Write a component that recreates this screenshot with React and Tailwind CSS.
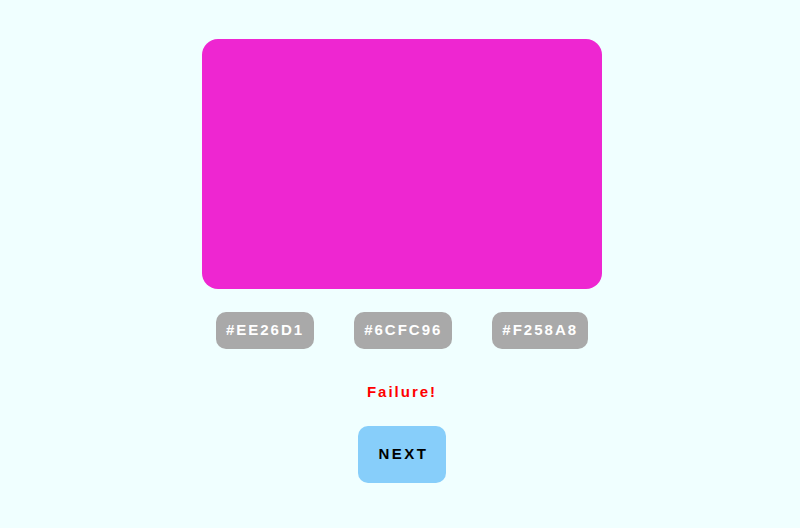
export default function App() {
  const options = ["#EE26D1", "#6CFC96", "#F258A8"];

  return (
    <div className="min-h-[528px] w-full bg-[#F0FFFF] font-['Liberation_Sans',Arial,sans-serif]">
      <div className="flex flex-col items-center pt-[39px] pl-[4px]">
        {/* Colour swatch */}
        <div className="h-[250px] w-[400px] rounded-[16px] bg-[#EE26D1]" />

        {/* Guess buttons */}
        <div className="mt-[23px] flex gap-[40px]">
          {options.map((hex) => (
            <button
              key={hex}
              className="flex h-[37px] items-center rounded-[10px] bg-[#A9A9A9] px-[10px] text-[15px] font-bold tracking-[2px] text-white"
            >
              {hex}
            </button>
          ))}
        </div>

        {/* Result */}
        <p className="mt-[34px] text-[15px] font-bold leading-[18px] tracking-[2px] text-[#FF0000]">
          Failure!
        </p>

        <button className="mt-[25px] flex h-[57px] w-[88px] items-center justify-center rounded-[10px] bg-[#87CEFA] pl-[3px] text-[15px] font-bold tracking-[2.5px] text-black">
          NEXT
        </button>
      </div>
    </div>
  );
}
